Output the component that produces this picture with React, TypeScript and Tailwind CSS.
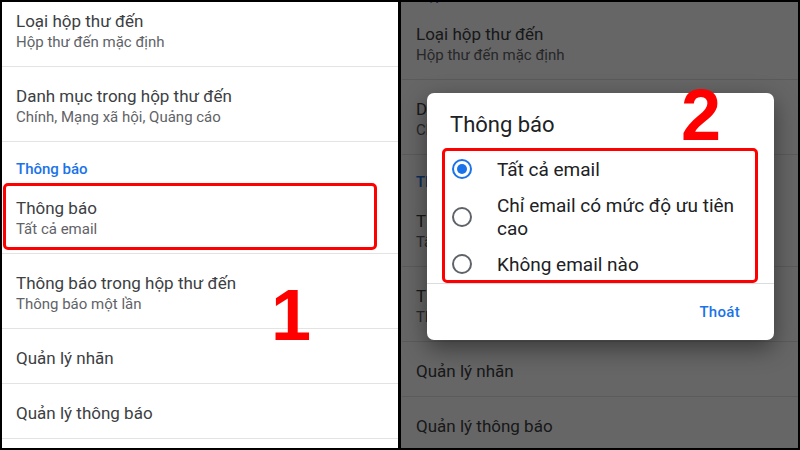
import React from "react";

type Item = { title: string; sub?: string; header?: boolean };

const items: Item[] = [
  { title: "Loại hộp thư đến", sub: "Hộp thư đến mặc định" },
  { title: "Danh mục trong hộp thư đến", sub: "Chính, Mạng xã hội, Quảng cáo" },
  { title: "Thông báo", header: true },
  { title: "Thông báo", sub: "Tất cả email" },
  { title: "Thông báo trong hộp thư đến", sub: "Thông báo một lần" },
  { title: "Quản lý nhãn" },
  { title: "Quản lý thông báo" },
];

function SettingsList({ highlight }: { highlight?: boolean }) {
  return (
    <div>
      {items.map((it, i) =>
        it.header ? (
          <div key={i} className="h-[37px] pt-[18px] px-[14px] text-[15px] leading-[19px] font-medium text-[#1a73e8]">
            {it.title}
          </div>
        ) : (
          <div
            key={i}
            className={`relative px-[14px] pt-[18px] border-b border-[#e3e3e3] ${it.sub ? "h-[75px]" : "h-[55px]"}`}
          >
            <div className="text-[17px] leading-[22px] text-[#3c4043]">{it.title}</div>
            {it.sub && <div className="text-[15px] leading-[20px] text-[#5f6368]">{it.sub}</div>}
            {highlight && i === 3 && (
              <div className="absolute left-[1px] right-[21px] top-[4px] bottom-[3px] border-[3px] border-[#ff0000] rounded-[5px]" />
            )}
          </div>
        )
      )}
    </div>
  );
}

function Radio({ on }: { on?: boolean }) {
  return (
    <div
      className={`w-[20px] h-[20px] rounded-full border-2 flex items-center justify-center shrink-0 ${
        on ? "border-[#1a73e8]" : "border-[#5f6368]"
      }`}
    >
      {on && <div className="w-[10px] h-[10px] rounded-full bg-[#1a73e8]" />}
    </div>
  );
}

const options = [
  { label: "Tất cả email", on: true, h: "h-[48px]" },
  { label: "Chỉ email có mức độ ưu tiên cao", h: "h-[47px]" },
  { label: "Không email nào", h: "h-[48px]" },
];

export default function App() {
  return (
    <div
      className="w-[800px] h-[450px] bg-black p-[2px] flex gap-[3px] overflow-hidden"
      style={{ fontFamily: "Roboto, 'Noto Sans', sans-serif" }}
    >
      {/* left: settings list */}
      <div className="w-[396px] h-[446px] bg-white relative overflow-hidden">
        <div className="-mt-[10px]">
          <SettingsList highlight />
        </div>
        <div
          className="absolute left-[269px] top-[277px] text-[72px] leading-none font-bold text-[#ff0000]"
          style={{ fontFamily: "'Liberation Sans', Arial, sans-serif" }}
        >
          1
        </div>
      </div>

      {/* right: dialog open */}
      <div className="w-[397px] h-[446px] bg-white relative overflow-hidden">
        <div className="-mt-[34px]">
          <div className="h-[37px] pt-[18px] px-[15px] text-[15px] leading-[19px] font-medium text-[#1a73e8]">Hộp thư đến</div>
          <div className="pl-[1px]">
            <SettingsList />
          </div>
        </div>
        <div className="absolute inset-0 bg-black/60" />

        <div className="absolute left-[26px] top-[91px] w-[347px] h-[247px] bg-white rounded-[7px] shadow-[0_8px_24px_rgba(0,0,0,0.45)] flex flex-col">
          <div className="pl-[23px] pt-[18px] h-[52px] text-[22px] leading-[28px] text-[#202124]">Thông báo</div>
          <div className="h-[139px] overflow-hidden border-b border-[#dadce0]">
            {options.map((o, i) => (
              <div key={i} className={`flex items-center pl-[25px] pr-[16px] gap-[25px] ${o.h}`}>
                <Radio on={o.on} />
                <div className="text-[19px] leading-[23px] text-[#202124] w-[250px]">{o.label}</div>
              </div>
            ))}
          </div>
          <div className="flex-1 flex items-center justify-end pr-[34px]">
            <span className="text-[15px] font-medium text-[#1a73e8] tracking-[0.3px]">Thoát</span>
          </div>
          <div className="absolute left-[15px] top-[55px] w-[316px] h-[135px] border-[3px] border-[#ff0000] rounded-[5px]" />
        </div>

        <div
          className="absolute left-[280px] top-[77px] text-[72px] leading-none font-bold text-[#ff0000]"
          style={{ fontFamily: "'Liberation Sans', Arial, sans-serif" }}
        >
          2
        </div>
      </div>
    </div>
  );
}
